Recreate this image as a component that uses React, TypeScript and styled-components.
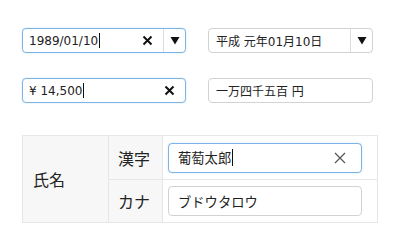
import React from "react";
import styled, { createGlobalStyle } from "styled-components";

const Global = createGlobalStyle`
  html, body { margin: 0; padding: 0; background: #fff; }
  body { font-family: "DejaVu Sans", "Noto Sans CJK JP", sans-serif; color: #222; }
`;

const Page = styled.div`
  padding: 28px 22px 0 22px;
  width: 400px;
  box-sizing: border-box;
`;

const Row = styled.div<{ $mt?: number }>`
  display: flex;
  gap: 22px;
  margin-top: ${(p) => p.$mt ?? 0}px;
`;

const Field = styled.div<{ $focus?: boolean; $w: number; $h?: number }>`
  box-sizing: border-box;
  width: ${(p) => p.$w}px;
  height: ${(p) => p.$h ?? 25}px;
  border: 1px solid ${(p) => (p.$focus ? "#7db4e6" : "#d2d2d2")};
  border-radius: 4px;
  display: flex;
  align-items: center;
  background: #fff;
  box-shadow: ${(p) => (p.$focus ? "0 0 2px rgba(102,175,233,0.35)" : "none")};
`;

const Value = styled.div<{ $size?: number; $pl?: number }>`
  flex: 1;
  padding-left: ${(p) => p.$pl ?? 6}px;
  font-size: ${(p) => p.$size ?? 12}px;
  display: flex;
  align-items: center;
  white-space: nowrap;
  color: #222;
`;

const Caret = styled.span<{ $h?: number }>`
  display: inline-block;
  width: 1px;
  height: ${(p) => p.$h ?? 15}px;
  background: #111;
  margin-left: 1px;
`;

const ClearBtn = styled.div<{ $thin?: boolean }>`
  width: 22px;
  display: flex;
  align-items: center;
  justify-content: center;
  margin-right: ${(p) => (p.$thin ? 10 : 5)}px;
`;

const DropBtn = styled.div`
  width: 21px;
  align-self: stretch;
  border-left: 1px solid #dcdcdc;
  display: flex;
  align-items: center;
  justify-content: center;
`;

const Table = styled.div`
  margin-top: 32px;
  width: 356px;
  display: grid;
  grid-template-columns: 86px 54px 1fr;
  grid-template-rows: 44px 42px;
  border: 1px solid #e6e6e6;
  box-sizing: border-box;
`;

const Head = styled.div<{ $rows?: number; $bottom?: boolean }>`
  background: #f7f7f7;
  grid-row: ${(p) => (p.$rows ? `span ${p.$rows}` : "auto")};
  border-right: 1px solid #e6e6e6;
  border-bottom: ${(p) => (p.$bottom ? "1px solid #e6e6e6" : "none")};
  display: flex;
  align-items: center;
  font-family: "Noto Sans CJK JP", sans-serif;
  font-size: 16px;
  padding-left: ${(p) => (p.$rows ? 10 : 9)}px;
  color: #222;
`;

const Cell = styled.div<{ $bottom?: boolean }>`
  display: flex;
  align-items: center;
  padding-left: 5px;
  border-bottom: ${(p) => (p.$bottom ? "1px solid #e6e6e6" : "none")};
`;

const BoldX = () => (
  <svg width="11" height="11" viewBox="0 0 11 11">
    <path d="M1.5 1.5 L9.5 9.5 M9.5 1.5 L1.5 9.5" stroke="#111" strokeWidth="2" />
  </svg>
);

const ThinX = () => (
  <svg width="12" height="12" viewBox="0 0 12 12">
    <path d="M1 1 L11 11 M11 1 L1 11" stroke="#555" strokeWidth="1.2" />
  </svg>
);

const Tri = () => (
  <svg width="10" height="9" viewBox="0 0 10 9">
    <path d="M0.5 1 L9.5 1 L5 8.5 Z" fill="#111" />
  </svg>
);

export default function App() {
  return (
    <>
      <Global />
      <Page>
        <Row>
          <Field $focus $w={164}>
            <Value>
              1989/01/10
              <Caret />
            </Value>
            <ClearBtn>
              <BoldX />
            </ClearBtn>
            <DropBtn>
              <Tri />
            </DropBtn>
          </Field>
          <Field $w={165}>
            <Value $pl={7}>平成 元年01月10日</Value>
            <DropBtn>
              <Tri />
            </DropBtn>
          </Field>
        </Row>
        <Row $mt={25}>
          <Field $focus $w={164}>
            <Value>
              ¥ 14,500
              <Caret />
            </Value>
            <ClearBtn>
              <BoldX />
            </ClearBtn>
          </Field>
          <Field $w={165}>
            <Value $pl={7}>一万四千五百 円</Value>
          </Field>
        </Row>
        <Table>
          <Head $rows={2}>氏名</Head>
          <Head $bottom>漢字</Head>
          <Cell $bottom>
            <Field $focus $w={194} $h={30}>
              <Value $size={13.3} $pl={9}>
                葡萄太郎
                <Caret $h={17} />
              </Value>
              <ClearBtn $thin>
                <ThinX />
              </ClearBtn>
            </Field>
          </Cell>
          <Head>カナ</Head>
          <Cell>
            <Field $w={194} $h={30}>
              <Value $size={13.3} $pl={9}>
                ブドウタロウ
              </Value>
            </Field>
          </Cell>
        </Table>
      </Page>
    </>
  );
}
